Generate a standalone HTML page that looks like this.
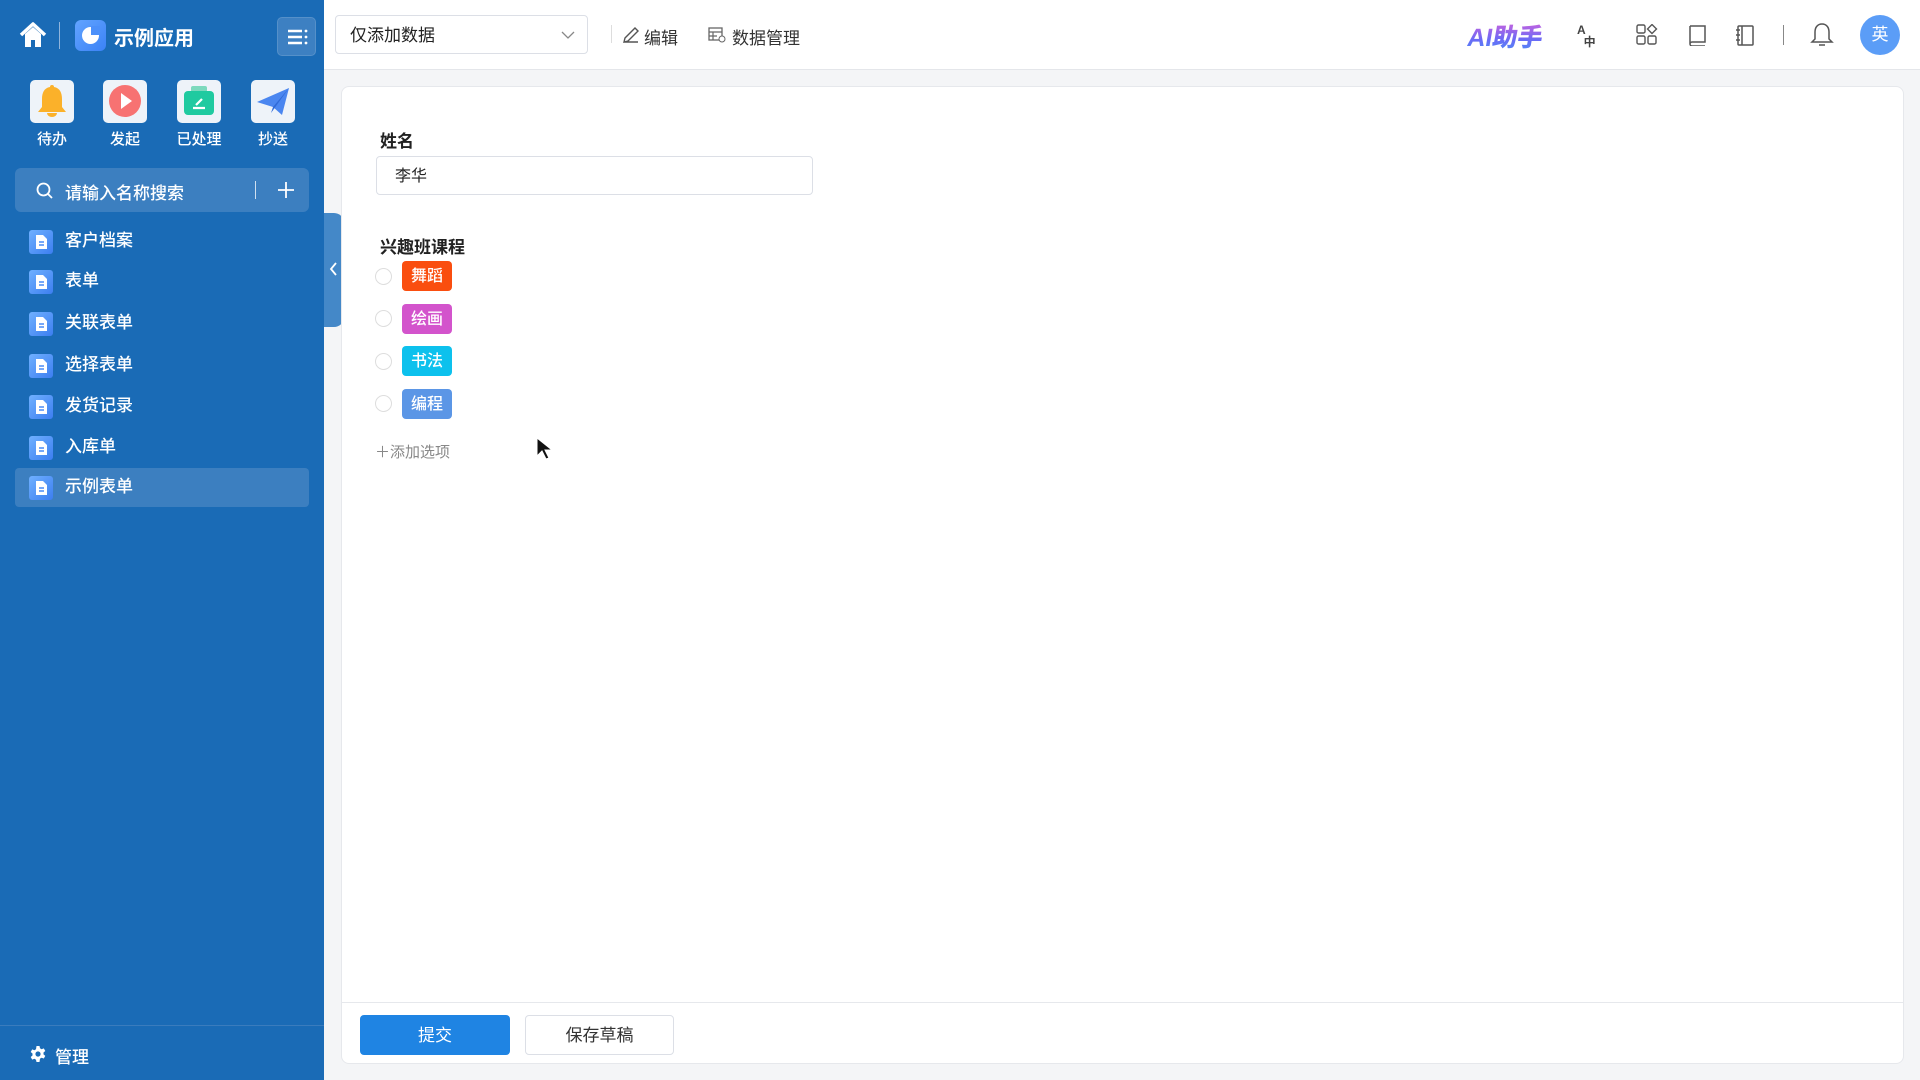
<!DOCTYPE html>
<html><head><meta charset="utf-8"><style>
*{box-sizing:border-box;margin:0;padding:0}
body{width:1920px;height:1080px;overflow:hidden;background:#f4f5f7;font-family:"Liberation Sans","Noto Sans CJK SC",sans-serif;position:relative;color:#222}
.sb{position:absolute;left:0;top:0;width:324px;height:1080px;background:#1a6bb6;color:#fff}
.abs{position:absolute}
.qi{position:absolute;top:80px;width:44px;height:43px;background:#eef3f9;border-radius:5px}
.ql{position:absolute;top:128px;font-size:15px;width:80px;text-align:center;font-weight:500}
.mi{position:absolute;left:15px;width:294px;height:38px;font-size:17px;line-height:38px;padding-left:50px;font-weight:500}
.mi svg{position:absolute;left:14px;top:8px}
.top{position:absolute;left:324px;top:0;right:0;height:70px;background:#fff;border-bottom:1px solid #e4e6ea}
.card{position:absolute;left:341px;top:86px;width:1563px;height:978px;background:#fff;border:1px solid #e6e8ec;border-radius:8px}
.tag{position:absolute;left:402px;width:50px;height:30px;border-radius:4px;color:#fff;font-size:16px;line-height:32px;text-align:center;font-weight:500}
.rad{position:absolute;left:375px;width:17px;height:17px;border:1px solid #ddd;border-radius:50%}
</style></head><body>
<svg width="0" height="0" style="position:absolute"><defs><linearGradient id="dg" x1="0" y1="0" x2="1" y2="1"><stop offset="0" stop-color="#6fb0ff"/><stop offset="1" stop-color="#3c7ef0"/></linearGradient></defs></svg>
<div class="sb">
 <svg class="abs" style="left:18px;top:20px" width="30" height="30" viewBox="0 0 30 30"><path d="M3 15 L15 4 L27 15" stroke="#fff" stroke-width="3.5" fill="none" stroke-linejoin="round"/><path d="M7 14 V27 H13 V20 H17 V27 H23 V14 L15 7Z" fill="#fff"/></svg>
 <div class="abs" style="left:59px;top:22px;width:1px;height:27px;background:#8fb4dc"></div>
 <div class="abs" style="left:75px;top:20px;width:31px;height:31px;border-radius:6px;background:linear-gradient(135deg,#62a4ff,#3b82f6)"><div style="position:absolute;left:7px;top:7px;width:17px;height:17px;border-radius:50%;background:#fff"></div><div style="position:absolute;left:16px;top:6px;width:9px;height:9px;background:#4c90fa"></div></div>
 <div class="abs" style="left:114px;top:22px;font-size:20px;font-weight:bold">示例应用</div>
 <div class="abs" style="left:277px;top:17px;width:39px;height:39px;border-radius:5px;background:#3d80c2;border:1px solid #5590c9"><svg width="39" height="39"><path d="M10 13h14M10 19h14M10 25h14" stroke="#fff" stroke-width="2.4"/><circle cx="28" cy="13" r="1.4" fill="#fff"/><circle cx="28" cy="19" r="1.4" fill="#fff"/><circle cx="28" cy="25" r="1.4" fill="#fff"/></svg></div>
 <div class="qi" style="left:30px"><svg width="44" height="43"><path d="M22 5a2 2 0 0 1 2 2c6 1 8 6 8 12v8l4 5H8l4-5v-8c0-6 2-11 8-12a2 2 0 0 1 2-2z" fill="#fbb12a"/><path d="M17 33a5 4 0 0 0 10 0z" fill="#fbb12a"/></svg></div>
 <div class="qi" style="left:103px"><svg width="44" height="43"><circle cx="22" cy="21" r="16" fill="#f77272"/><path d="M18 13l11 8-11 8z" fill="#fff"/></svg></div>
 <div class="qi" style="left:177px"><svg width="44" height="43"><rect x="14" y="6" width="16" height="6" rx="2" fill="#7cd9bd"/><rect x="7" y="11" width="30" height="24" rx="4" fill="#1fcaa0"/><path d="M16 28h12M19 25l6-6" stroke="#fff" stroke-width="2.2"/></svg></div>
 <div class="qi" style="left:251px"><svg width="44" height="43"><path d="M6 22 L38 8 L31 35 L22 27 Z" fill="#4a86f0"/><path d="M22 27 L38 8 L20 33Z" fill="#2f6ad8"/></svg></div>
 <div class="ql" style="left:12px">待办</div><div class="ql" style="left:85px">发起</div><div class="ql" style="left:159px">已处理</div><div class="ql" style="left:233px">抄送</div>
 <div class="abs" style="left:15px;top:168px;width:294px;height:44px;border-radius:6px;background:#3c7fc0">
  <svg class="abs" style="left:20px;top:13px" width="20" height="20"><circle cx="8.5" cy="8.5" r="6" stroke="#fff" stroke-width="1.8" fill="none"/><path d="M13 13l4 4" stroke="#fff" stroke-width="1.8"/></svg>
  <div class="abs" style="left:50px;top:11px;font-size:17px;font-weight:500">请输入名称搜索</div>
  <div class="abs" style="left:240px;top:13px;width:1px;height:18px;background:#d0e0f0"></div>
  <svg class="abs" style="left:262px;top:13px" width="18" height="18"><path d="M9 1v16M1 9h16" stroke="#fff" stroke-width="1.8"/></svg>
 </div>
 <div class="mi" style="top:222px"><svg width="24" height="24"><rect width="24" height="24" rx="3" fill="url(#dg)"/><path d="M7 5h7l4 4v10H7z" fill="#fff"/><path d="M10 12h5M10 15h5" stroke="#4a8cf5" stroke-width="1.6"/></svg>客户档案</div>
 <div class="mi" style="top:262px"><svg width="24" height="24"><rect width="24" height="24" rx="3" fill="url(#dg)"/><path d="M7 5h7l4 4v10H7z" fill="#fff"/><path d="M10 12h5M10 15h5" stroke="#4a8cf5" stroke-width="1.6"/></svg>表单</div>
 <div class="mi" style="top:304px"><svg width="24" height="24"><rect width="24" height="24" rx="3" fill="url(#dg)"/><path d="M7 5h7l4 4v10H7z" fill="#fff"/><path d="M10 12h5M10 15h5" stroke="#4a8cf5" stroke-width="1.6"/></svg>关联表单</div>
 <div class="mi" style="top:346px"><svg width="24" height="24"><rect width="24" height="24" rx="3" fill="url(#dg)"/><path d="M7 5h7l4 4v10H7z" fill="#fff"/><path d="M10 12h5M10 15h5" stroke="#4a8cf5" stroke-width="1.6"/></svg>选择表单</div>
 <div class="mi" style="top:387px"><svg width="24" height="24"><rect width="24" height="24" rx="3" fill="url(#dg)"/><path d="M7 5h7l4 4v10H7z" fill="#fff"/><path d="M10 12h5M10 15h5" stroke="#4a8cf5" stroke-width="1.6"/></svg>发货记录</div>
 <div class="mi" style="top:428px"><svg width="24" height="24"><rect width="24" height="24" rx="3" fill="url(#dg)"/><path d="M7 5h7l4 4v10H7z" fill="#fff"/><path d="M10 12h5M10 15h5" stroke="#4a8cf5" stroke-width="1.6"/></svg>入库单</div>
 <div class="mi" style="top:468px;height:39px;background:#3c7fc0;border-radius:4px"><svg width="24" height="24"><rect width="24" height="24" rx="3" fill="url(#dg)"/><path d="M7 5h7l4 4v10H7z" fill="#fff"/><path d="M10 12h5M10 15h5" stroke="#4a8cf5" stroke-width="1.6"/></svg>示例表单</div>
 <div class="abs" style="left:0;top:1025px;width:324px;height:1px;background:#3a7cbd"></div>
 <svg class="abs" style="left:29px;top:1045px" width="18" height="18" viewBox="0 0 18 18"><path d="M7.5 1h3l.5 2.3 1.6.9 2.2-.8 1.5 2.6-1.8 1.5v1.9l1.8 1.5-1.5 2.6-2.2-.8-1.6.9L10.5 17h-3L7 14.7l-1.6-.9-2.2.8-1.5-2.6 1.8-1.5V8.5L1.7 7l1.5-2.6 2.2.8L7 4.3z" fill="#fff"/><circle cx="9" cy="9" r="2.6" fill="#1a6bb6"/></svg>
 <div class="abs" style="left:55px;top:1043px;font-size:17px;font-weight:500">管理</div>
</div>
<div class="abs" style="left:324px;top:213px;width:20px;height:114px;background:#4488c8;border-radius:0 10px 10px 0"><svg width="20" height="114"><path d="M12 50l-5 6 5 6" stroke="#fff" stroke-width="1.8" fill="none"/></svg></div>
<div class="top">
 <div class="abs" style="left:11px;top:15px;width:253px;height:39px;border:1px solid #dcdfe6;border-radius:4px;font-size:17px;line-height:39px;padding-left:14px">仅添加数据<svg class="abs" style="right:12px;top:14px" width="14" height="10"><path d="M1 2l6 6 6-6" stroke="#888" fill="none" stroke-width="1.3"/></svg></div>
 <div class="abs" style="left:287px;top:25px;width:1px;height:18px;background:#ddd"></div>
 <svg class="abs" style="left:298px;top:26px" width="18" height="18"><path d="M2 16l1-4L13 2l3 3L6 15z M2 16h14" stroke="#555" fill="none" stroke-width="1.4"/></svg>
 <div class="abs" style="left:320px;top:24px;font-size:17px;color:#333">编辑</div>
 <svg class="abs" style="left:384px;top:27px" width="18" height="16"><rect x="1" y="1" width="13" height="12" stroke="#666" fill="none" stroke-width="1.3"/><path d="M1 5h13M1 9h8M5 5v8" stroke="#666" stroke-width="1.2"/><circle cx="14" cy="12" r="3" fill="#fff" stroke="#666"/></svg>
 <div class="abs" style="left:408px;top:24px;font-size:17px;color:#333">数据管理</div>
 <div class="abs" style="left:1144px;top:18px;font-size:25px;font-weight:900;transform:skewX(-10deg);background:linear-gradient(180deg,#e060d8,#6a6af6 60%,#4a90f5);-webkit-background-clip:text;color:transparent">AI助手</div>
 <div class="abs" style="left:1253px;top:24px;font-size:12px;color:#444;line-height:12px;font-weight:bold">A<br>&nbsp;&nbsp;中</div>
 <svg class="abs" style="left:1312px;top:24px" width="22" height="22"><rect x="1" y="1" width="8" height="8" rx="1.5" stroke="#555" fill="none" stroke-width="1.4"/><rect x="1" y="12" width="8" height="8" rx="1.5" stroke="#555" fill="none" stroke-width="1.4"/><rect x="12" y="12" width="8" height="8" rx="1.5" stroke="#555" fill="none" stroke-width="1.4"/><path d="M16 0.5l4.5 4.5-4.5 4.5-4.5-4.5z" stroke="#555" fill="none" stroke-width="1.4"/></svg>
 <svg class="abs" style="left:1362px;top:24px" width="22" height="22"><path d="M4 2h15v16H6a2 2 0 0 0 0 4h13M4 2v18" stroke="#555" fill="none" stroke-width="1.5"/></svg>
 <svg class="abs" style="left:1410px;top:24px" width="22" height="22"><rect x="4" y="2" width="15" height="19" rx="1" stroke="#555" fill="none" stroke-width="1.5"/><path d="M8 2v19M2 6h4M2 11h4M2 16h4" stroke="#555" stroke-width="1.5"/></svg>
 <div class="abs" style="left:1459px;top:25px;width:1px;height:20px;background:#888"></div>
 <svg class="abs" style="left:1486px;top:22px" width="24" height="26"><path d="M12 2c5 0 7 4 7 8v7l3 3H2l3-3v-7c0-4 2-8 7-8z M9 23h6" stroke="#555" fill="none" stroke-width="1.5"/></svg>
 <div class="abs" style="left:1536px;top:15px;width:40px;height:40px;border-radius:50%;background:#5b9df7;color:#fff;font-size:17px;line-height:40px;text-align:center">英</div>
</div>
<div class="card">
 <div class="abs" style="left:38px;top:40px;font-size:17px;font-weight:bold">姓名</div>
 <div class="abs" style="left:34px;top:69px;width:437px;height:39px;border:1px solid #dcdfe6;border-radius:4px;font-size:16px;line-height:39px;padding-left:18px">李华</div>
 <div class="abs" style="left:38px;top:146px;font-size:17px;font-weight:bold">兴趣班课程</div>
</div>
<div class="rad" style="top:268px"></div><div class="tag" style="top:261px;background:#fa4e0f">舞蹈</div>
<div class="rad" style="top:310px"></div><div class="tag" style="top:304px;background:#d354cc">绘画</div>
<div class="rad" style="top:353px"></div><div class="tag" style="top:346px;background:#0dc1ed">书法</div>
<div class="rad" style="top:395px"></div><div class="tag" style="top:389px;background:#5b96e6">编程</div>
<div class="abs" style="left:375px;top:441px;font-size:15px;color:#888">＋添加选项</div>
<svg class="abs" style="left:536px;top:437px" width="16" height="24"><path d="M1 1v18l5-5 4 8 3-1-4-8h7z" fill="#111" stroke="#fff" stroke-width="1"/></svg>
<div class="abs" style="left:342px;top:1002px;width:1561px;height:1px;background:#e6e8ec"></div>
<div class="abs" style="left:360px;top:1015px;width:150px;height:40px;background:#1f84e3;border-radius:4px;color:#fff;font-size:17px;line-height:41px;text-align:center">提交</div>
<div class="abs" style="left:525px;top:1015px;width:149px;height:40px;border:1px solid #dcdfe6;border-radius:4px;font-size:17px;line-height:39px;text-align:center;color:#333">保存草稿</div>
</body></html>
